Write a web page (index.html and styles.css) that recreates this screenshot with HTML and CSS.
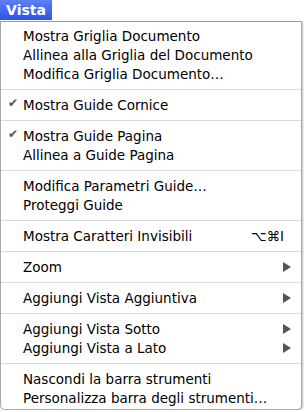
FILE: index.html
```html
<!DOCTYPE html>
<html lang="it">
<head>
    <meta charset="UTF-8">
    <title>Vista</title>
    <link rel="stylesheet" href="styles.css">
</head>
<body>
    <div class="menubar">
        <span class="menu-title">Vista</span>
    </div>

    <div class="menu">
        <div class="group">
            <div class="item"><span class="label">Mostra Griglia Documento</span></div>
            <div class="item"><span class="label">Allinea alla Griglia del Documento</span></div>
            <div class="item"><span class="label">Modifica Griglia Documento…</span></div>
        </div>
        <div class="sep"></div>
        <div class="group">
            <div class="item"><span class="check">&#10004;</span><span class="label">Mostra Guide Cornice</span></div>
        </div>
        <div class="sep"></div>
        <div class="group">
            <div class="item"><span class="check">&#10004;</span><span class="label">Mostra Guide Pagina</span></div>
            <div class="item"><span class="label">Allinea a Guide Pagina</span></div>
        </div>
        <div class="sep"></div>
        <div class="group">
            <div class="item"><span class="label">Modifica Parametri Guide…</span></div>
            <div class="item"><span class="label">Proteggi Guide</span></div>
        </div>
        <div class="sep"></div>
        <div class="group">
            <div class="item"><span class="label">Mostra Caratteri Invisibili</span><span class="shortcut">⌥⌘I</span></div>
        </div>
        <div class="sep"></div>
        <div class="group">
            <div class="item"><span class="label">Zoom</span><span class="arrow"></span></div>
        </div>
        <div class="sep"></div>
        <div class="group">
            <div class="item"><span class="label">Aggiungi Vista Aggiuntiva</span><span class="arrow"></span></div>
        </div>
        <div class="sep"></div>
        <div class="group">
            <div class="item"><span class="label">Aggiungi Vista Sotto</span><span class="arrow"></span></div>
            <div class="item"><span class="label">Aggiungi Vista a Lato</span><span class="arrow"></span></div>
        </div>
        <div class="sep"></div>
        <div class="group">
            <div class="item"><span class="label">Nascondi la barra strumenti</span></div>
            <div class="item"><span class="label">Personalizza barra degli strumenti…</span></div>
        </div>
    </div>
</body>
</html>
```

FILE: styles.css
```css
body {
    margin: 0;
    background-color: #ffffff;
    font-family: 'DejaVu Sans', sans-serif;
    font-size: 13.5px;
    color: #000;
}

.menubar {
    height: 21px;
    display: flex;
    background-color: #fff;
}

.menu-title {
    width: 52px;
    height: 20px;
    line-height: 20px;
    text-align: center;
    color: #fff;
    font-weight: bold;
    font-size: 14px;
    background: linear-gradient(#5f80f4, #2b51ea);
}

.menu {
    width: 302px;
    height: 389px;
    box-sizing: border-box;
    padding-top: 4px;
    border: 1px solid #a8a8a8;
    border-top-color: #9a9a9a;
    border-radius: 0 0 5px 5px;
    box-shadow: 1px 1px 2px rgba(0,0,0,0.25);
    background-color: #fff;
}

.item {
    height: 19px;
    display: flex;
    align-items: center;
    position: relative;
    padding-left: 22px;
    padding-right: 10px;
}

.label {
    flex: 1;
    white-space: nowrap;
}

.check {
    position: absolute;
    left: 7px;
    top: 1px;
    color: #555;
    font-size: 12px;
}

.shortcut {
    color: #000;
    margin-right: 7px;
}

.arrow {
    width: 0;
    height: 0;
    border-top: 5px solid transparent;
    border-bottom: 5px solid transparent;
    border-left: 8px solid #555;
}

.sep {
    height: 12px;
    display: flex;
    align-items: center;
}

.sep::before {
    content: "";
    flex: 1;
    height: 1px;
    background-color: #dcdcdc;
}
```
